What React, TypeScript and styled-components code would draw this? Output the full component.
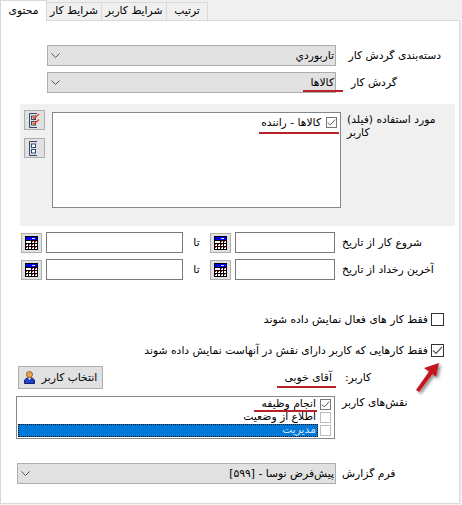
import styled, { createGlobalStyle } from 'styled-components'

const GlobalStyle = createGlobalStyle`
  html, body {
    margin: 0;
    padding: 0;
    background: #f0f0f0;
  }
  body {
    font-family: "DejaVu Sans", "Noto Sans", sans-serif;
    font-size: 10.75px;
    color: #000;
  }
`

const Window = styled.div`
  position: relative;
  width: 462px;
  height: 505px;
  overflow: hidden;
`

const TabStrip = styled.div`
  display: flex;
  align-items: flex-end;
  direction: ltr;
  height: 20px;
`

const Tab = styled.div<{ $active?: boolean; $width: number }>`
  box-sizing: border-box;
  width: ${(p) => p.$width}px;
  height: ${(p) => (p.$active ? 21 : 18)}px;
  margin-bottom: ${(p) => (p.$active ? -1 : 0)}px;
  position: relative;
  z-index: ${(p) => (p.$active ? 1 : 0)};
  background: ${(p) => (p.$active ? '#fff' : '#f0f0f0')};
  border: 1px solid #d9d9d9;
  border-bottom: none;
  border-left: ${(p) => (p.$active ? '1px solid #d9d9d9' : 'none')};
  direction: rtl;
  text-align: center;
  line-height: ${(p) => (p.$active ? 19 : 16)}px;
  white-space: nowrap;
`

const Panel = styled.div`
  box-sizing: border-box;
  position: relative;
  direction: rtl;
  width: 460px;
  height: 484px;
  background: #fff;
  border: 1px solid #d9d9d9;
  padding-top: 24px;
`

const FieldRow = styled.div<{ $top?: number; $align?: string }>`
  display: flex;
  align-items: ${(p) => p.$align ?? 'center'};
  gap: 6px;
  padding-right: 18px;
  margin-top: ${(p) => p.$top ?? 0}px;
`

const FieldLabel = styled.div<{ $inset?: number }>`
  box-sizing: border-box;
  width: 99px;
  flex: none;
  text-align: left;
  padding-left: ${(p) => p.$inset ?? 0}px;
  white-space: nowrap;
  line-height: 14px;
`

const Combo = styled.div<{ $width: number }>`
  box-sizing: border-box;
  display: flex;
  align-items: center;
  justify-content: space-between;
  width: ${(p) => p.$width}px;
  height: 21px;
  padding: 0 1px 0 3px;
  background: #e1e1e1;
  border: 1px solid #adadad;
  white-space: nowrap;
`

const ComboChevron = styled.svg`
  flex: none;
`

const Marked = styled.span<{ $left: number; $right: number; $bottom: number }>`
  position: relative;
  &::after {
    content: '';
    position: absolute;
    left: ${(p) => p.$left}px;
    right: ${(p) => p.$right}px;
    bottom: ${(p) => p.$bottom}px;
    height: 2px;
    background: #b5222a;
  }
`

const FieldSection = styled.div`
  box-sizing: border-box;
  display: flex;
  align-items: flex-start;
  width: 435px;
  height: 122px;
  margin: 11px 4px 0 0;
  padding: 8px 0 0 4px;
  background: #f0f0f0;
`

const SectionLabel = styled.div`
  box-sizing: border-box;
  width: 114px;
  flex: none;
  margin-top: 1px;
  padding-left: 6px;
  line-height: 13px;
  text-align: left;
  white-space: nowrap;
`

const FieldList = styled.div`
  box-sizing: border-box;
  width: 289px;
  height: 96px;
  background: #fff;
  border: 1px solid #82878c;
  padding: 3px 3px;
`

const ListItem = styled.div`
  display: flex;
  align-items: center;
  gap: 5px;
  height: 13px;
  white-space: nowrap;
`

const CheckBox = styled.span<{ $size?: number; $dark?: boolean; $faint?: boolean }>`
  box-sizing: border-box;
  display: inline-flex;
  align-items: center;
  justify-content: center;
  flex: none;
  width: ${(p) => p.$size ?? 11}px;
  height: ${(p) => p.$size ?? 11}px;
  background: #fff;
  border: 1px solid ${(p) => (p.$dark ? '#333' : p.$faint ? '#bcbcbc' : '#777')};
`

const ToolColumn = styled.div`
  display: flex;
  flex-direction: column;
  gap: 8px;
  margin: -2px auto 0 0;
`

const ToolButton = styled.div`
  box-sizing: border-box;
  display: flex;
  align-items: center;
  justify-content: center;
  flex: none;
  width: 21px;
  height: 20px;
  background: #e1e1e1;
  border: 1px solid #adadad;
`

const DateRow = styled(FieldRow)`
  gap: 0;
`

const DateInput = styled.div<{ $width: number }>`
  box-sizing: border-box;
  flex: none;
  width: ${(p) => p.$width}px;
  height: 21px;
  background: #fff;
  border: 1px solid #7a7a7a;
`

const DateLabel = styled(FieldLabel)`
  margin-left: 7px;
`

const DateButton = styled(ToolButton)`
  margin-right: 4px;
`

const ToWord = styled.div`
  flex: none;
  width: 27px;
  text-align: center;
`

const CheckRow = styled.div<{ $top: number }>`
  display: flex;
  align-items: center;
  gap: 3px;
  margin-top: ${(p) => p.$top}px;
  padding-right: 15px;
  white-space: nowrap;
  height: 13px;
`

const UserRow = styled.div`
  display: flex;
  align-items: center;
  width: 441px;
  height: 23px;
  margin-top: 9px;
`

const UserLabel = styled(FieldLabel)`
  width: 116px;
  padding-left: 2px;
  margin-left: 11px;
`

const PickButton = styled.div`
  box-sizing: border-box;
  display: flex;
  align-items: center;
  justify-content: center;
  gap: 7px;
  width: 85px;
  height: 23px;
  margin-right: auto;
  background: #e1e1e1;
  border: 1px solid #adadad;
`

const RolesRow = styled(FieldRow)`
  gap: 7px;
`

const RolesList = styled.div`
  box-sizing: border-box;
  width: 319px;
  height: 43px;
  padding: 1px;
  background: #fff;
  border: 1px solid #82878c;
`

const RoleItem = styled.div`
  display: flex;
  align-items: center;
  gap: 2px;
  height: 13px;
  padding-right: 2px;
  white-space: nowrap;
`

const RoleName = styled.div<{ $selected?: boolean }>`
  flex: 1;
  height: 13px;
  line-height: 12px;
  box-sizing: border-box;
  padding-right: 2px;
  color: ${(p) => (p.$selected ? '#cfe6fa' : '#000')};
  background: ${(p) => (p.$selected ? '#0078d7' : 'transparent')};
  outline: ${(p) => (p.$selected ? '1px dotted #1a1205' : 'none')};
  outline-offset: -1px;
`

const Arrow = styled.svg`
  position: absolute;
  left: 412px;
  top: 336px;
`

const Chevron = () => (
  <ComboChevron width="9" height="6" viewBox="0 0 9 6">
    <path d="M0.5 0.5 L4.5 4.5 L8.5 0.5" fill="none" stroke="#555" strokeWidth="1" />
  </ComboChevron>
)

const Tick = () => (
  <svg width="11" height="9" viewBox="0 0 11 9">
    <path d="M1 4.5 L4 7.5 L10 1" fill="none" stroke="#555" strokeWidth="1.2" />
  </svg>
)

const CalcIcon = () => (
  <svg width="13" height="14" viewBox="0 0 13 14" shapeRendering="crispEdges">
    <rect width="13" height="14" fill="#000" />
    <rect x="1" y="1" width="11" height="3" fill="#0000f0" />
    <rect x="7" y="2" width="3" height="1" fill="#ddd" />
    <rect x="1" y="5" width="5" height="2" fill="#fff" />
    {[7, 10].flatMap((y) => [1, 4, 7, 10].map((x) => <rect key={`${x}-${y}`} x={x} y={y + 1} width="2" height="2" fill="#fff" />))}
    {[7, 10].map((x) => <rect key={x} x={x} y="5" width="2" height="2" fill="#fff" />)}
    {[[7, 5], [10, 5], [1, 8], [4, 8], [7, 8], [1, 11], [7, 11], [10, 11]].map(([x, y]) => (
      <rect key={`r${x}-${y}`} x={x} y={y} width="1" height="1" fill="#e00000" />
    ))}
  </svg>
)

const CheckListIcon = ({ checked }: { checked?: boolean }) => (
  <svg width="11" height="15" viewBox="0 0 11 15">
    <path d="M8 0.5 H0.5 V14.5 H8" fill="none" stroke="#3a4660" strokeWidth="1" />
    <rect x="2.5" y="3" width="4" height="3.5" fill="#fff" stroke="#2c4a7c" />
    <rect x="2.5" y="8.5" width="4" height="3.5" fill="#fff" stroke="#2c4a7c" />
    {checked && <path d="M3.5 4 L5 5.5 L10 1 M3.5 9.5 L5 11 L10 6.5" fill="none" stroke="#e8401a" strokeWidth="1.3" />}
  </svg>
)

const PersonIcon = () => (
  <svg width="11" height="13" viewBox="0 0 11 13">
    <path d="M0.5 12.5 V9 L3 7 H8 L10.5 9 V12.5 Z" fill="#2040c8" stroke="#102070" />
    <path d="M4 7 L5.5 9 L7 7 Z" fill="#fff" />
    <circle cx="5.5" cy="3.5" r="3" fill="#f0a050" stroke="#805020" strokeWidth="0.8" />
  </svg>
)

export default function App() {
  return (
    <Window>
      <GlobalStyle />
      <TabStrip>
        <Tab $active $width={47}>محتوی</Tab>
        <Tab $width={55}>شرایط کار</Tab>
        <Tab $width={65}>شرایط کاربر</Tab>
        <Tab $width={41}>ترتیب</Tab>
      </TabStrip>
      <Panel>
        <FieldRow>
          <FieldLabel $inset={9}>دسته‌بندی گردش کار</FieldLabel>
          <Combo $width={289}>
            <span>تاربوردي</span>
            <Chevron />
          </Combo>
        </FieldRow>
        <FieldRow $top={6}>
          <FieldLabel $inset={9}>گردش کار</FieldLabel>
          <Combo $width={289}>
            <Marked $left={-8} $right={-9} $bottom={-3}>کالاها</Marked>
            <Chevron />
          </Combo>
        </FieldRow>
        <FieldSection>
          <SectionLabel>
            مورد استفاده (فیلد)
            <br />
            کاربر
          </SectionLabel>
          <FieldList>
            <ListItem>
              <CheckBox><Tick /></CheckBox>
              <Marked $left={-2} $right={-18} $bottom={-5}>کالاها - راننده</Marked>
            </ListItem>
          </FieldList>
          <ToolColumn>
            <ToolButton><CheckListIcon checked /></ToolButton>
            <ToolButton><CheckListIcon /></ToolButton>
          </ToolColumn>
        </FieldSection>
        <DateRow $top={6}>
          <DateLabel>شروع کار از تاریخ</DateLabel>
          <DateInput $width={100} />
          <DateButton><CalcIcon /></DateButton>
          <ToWord>تا</ToWord>
          <DateInput $width={137} />
          <DateButton><CalcIcon /></DateButton>
        </DateRow>
        <DateRow $top={6}>
          <DateLabel>آخرین رخداد از تاریخ</DateLabel>
          <DateInput $width={100} />
          <DateButton><CalcIcon /></DateButton>
          <ToWord>تا</ToWord>
          <DateInput $width={137} />
          <DateButton><CalcIcon /></DateButton>
        </DateRow>
        <CheckRow $top={33}>
          <CheckBox $size={13} $dark />
          <span>فقط کار های فعال نمایش داده شوند</span>
        </CheckRow>
        <CheckRow $top={18}>
          <CheckBox $size={13} $dark><Tick /></CheckBox>
          <span>فقط کارهایی که کاربر دارای نقش در آنهاست نمایش داده شوند</span>
        </CheckRow>
        <UserRow>
          <UserLabel>کاربر:</UserLabel>
          <Marked $left={-8} $right={-4} $bottom={-4}>آقای خوبی</Marked>
          <PickButton>
            <span>انتخاب کاربر</span>
            <PersonIcon />
          </PickButton>
        </UserRow>
        <RolesRow $top={7} $align="flex-start">
          <FieldLabel>نقش‌های کاربر</FieldLabel>
          <RolesList>
            <RoleItem>
              <CheckBox><Tick /></CheckBox>
              <RoleName>
                <Marked $left={-8} $right={-1} $bottom={-2}>انجام وظیفه</Marked>
              </RoleName>
            </RoleItem>
            <RoleItem>
              <CheckBox $faint />
              <RoleName>اطلاع از وضعیت</RoleName>
            </RoleItem>
            <RoleItem>
              <CheckBox $faint />
              <RoleName $selected>مدیریت</RoleName>
            </RoleItem>
          </RolesList>
        </RolesRow>
        <FieldRow $top={24}>
          <FieldLabel>فرم گزارش</FieldLabel>
          <Combo $width={319}>
            <span>پیش‌فرض نوسا - [۵۹۹]</span>
            <Chevron />
          </Combo>
        </FieldRow>
        <Arrow width="36" height="40" viewBox="0 0 36 40">
          <defs>
            <filter id="arrowShadow" x="-30%" y="-30%" width="170%" height="170%">
              <feDropShadow dx="2" dy="2" stdDeviation="1.5" floodColor="#000" floodOpacity="0.45" />
            </filter>
          </defs>
          <path d="M26 6 L11 11 L16 14.5 L3 33 L6 35 L19.5 17 L23 20 Z" fill="#c4131b" filter="url(#arrowShadow)" />
        </Arrow>
      </Panel>
    </Window>
  )
}
